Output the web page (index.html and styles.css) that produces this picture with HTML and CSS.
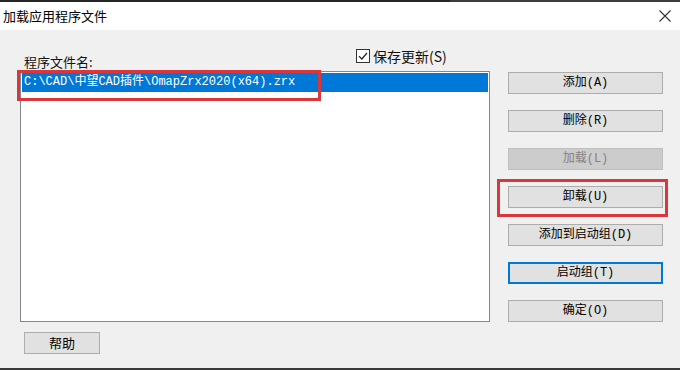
FILE: index.html
```html
<!DOCTYPE html>
<html lang="zh-CN">
<head>
<meta charset="utf-8">
<title>加载应用程序文件</title>
<link rel="stylesheet" href="styles.css">
</head>
<body>
<div class="screen">
  <div class="topstrip"></div>
  <div class="titlebar">
    <span class="title">加载应用程序文件</span>
    <svg class="close" width="12" height="12" viewBox="0 0 12 12"><path d="M0.5 0.5 L11.5 11.5 M11.5 0.5 L0.5 11.5" stroke="#333" stroke-width="1.1" fill="none"/></svg>
  </div>
  <div class="content">
    <div class="left">
      <div class="header">
        <span class="label">程序文件名:</span>
        <label class="check">
          <span class="box"><svg width="12" height="12" viewBox="0 0 12 12"><path d="M2 6.2 L4.8 9 L10 3" stroke="#222" stroke-width="1.2" fill="none"/></svg></span>
          <span class="check-text">保存更新(S)</span>
        </label>
      </div>
      <div class="list">
        <div class="row selected">C:\CAD\中望CAD插件\OmapZrx2020(x64).zrx</div>
        <div class="mark mark-file"></div>
      </div>
      <button class="btn help">帮助</button>
    </div>
    <div class="right">
      <button class="btn">添加(A)</button>
      <button class="btn">删除(R)</button>
      <button class="btn disabled">加载(L)</button>
      <div class="marked">
        <button class="btn">卸载(U)</button>
        <div class="mark mark-btn"></div>
      </div>
      <button class="btn">添加到启动组(D)</button>
      <button class="btn focused">启动组(T)</button>
      <button class="btn">确定(O)</button>
    </div>
  </div>
  <div class="bottomstrip"></div>
</div>
</body>
</html>
```

FILE: styles.css
```css
html, body {
  margin: 0;
  padding: 0;
  background: #f0f0f0;
}
.screen {
  width: 680px;
  height: 370px;
  display: flex;
  flex-direction: column;
  overflow: hidden;
  font-family: "Noto Sans CJK SC", "Noto Sans", sans-serif;
  color: #000;
}
.topstrip {
  height: 2px;
  background: linear-gradient(to right, #262626 0, #262626 450px, #3c3c3c 450px);
}
.bottomstrip {
  height: 2px;
  background: #3a3a3a;
}
.titlebar {
  height: 28px;
  background: #fff;
  display: flex;
  align-items: center;
  justify-content: space-between;
  padding: 0 9px 0 3px;
}
.title {
  font-size: 13px;
  line-height: 16px;
  color: #000;
}
.close {
  display: block;
}
.content {
  height: 338px;
  display: flex;
  gap: 18px;
  padding-left: 20px;
}
.left {
  width: 470px;
  display: flex;
  flex-direction: column;
}
.header {
  height: 41px;
  display: flex;
  align-items: flex-start;
}
.label {
  margin-left: 4px;
  width: 332px;
  margin-top: 23px;
  font-size: 13px;
  line-height: 18px;
  color: #111;
}
.check {
  margin-top: 19px;
  display: flex;
  align-items: center;
  gap: 3px;
  height: 14px;
}
.box {
  width: 14px;
  height: 14px;
  box-sizing: border-box;
  border: 1px solid #333;
  background: #fff;
  display: flex;
  align-items: center;
  justify-content: center;
}
.box svg { display: block; }
.check-text {
  font-size: 14px;
  line-height: 14px;
  color: #111;
}
.list {
  position: relative;
  height: 251px;
  box-sizing: border-box;
  border: 1px solid #828790;
  background: #fff;
  padding: 1px;
}
.row {
  height: 19px;
  line-height: 19px;
  padding-left: 2px;
  font-family: "Liberation Mono", "Noto Sans CJK SC", monospace;
  font-size: 12px;
  white-space: nowrap;
}
.row.selected {
  background: #0078d7;
  color: #fff;
}
.mark {
  position: absolute;
  border: 3px solid #d9363e;
  box-sizing: border-box;
  pointer-events: none;
}
.mark-file {
  left: -4px;
  top: -2px;
  width: 304px;
  height: 31px;
}
.btn {
  display: block;
  box-sizing: border-box;
  width: 155px;
  height: 22px;
  margin: 0;
  padding: 0;
  border: 1px solid #adadad;
  background: #e1e1e1;
  font-family: "Liberation Mono", "Noto Sans CJK SC", monospace;
  font-size: 12px;
  line-height: 20px;
  color: #000;
  text-align: center;
}
.btn.disabled {
  background: #cccccc;
  border-color: #bfbfbf;
  color: #838383;
}
.btn.focused {
  border: 2px solid #0078d7;
  background: #e1e1e1;
  line-height: 18px;
}
.help {
  width: 76px;
  margin-top: 10px;
  margin-left: 4px;
  font-family: "Noto Sans CJK SC", sans-serif;
  font-size: 13px;
}
.right {
  width: 155px;
  padding-top: 42px;
  display: flex;
  flex-direction: column;
  gap: 16px;
}
.marked {
  position: relative;
}
.mark-btn {
  left: -11px;
  top: -7px;
  width: 171px;
  height: 38px;
}
```
